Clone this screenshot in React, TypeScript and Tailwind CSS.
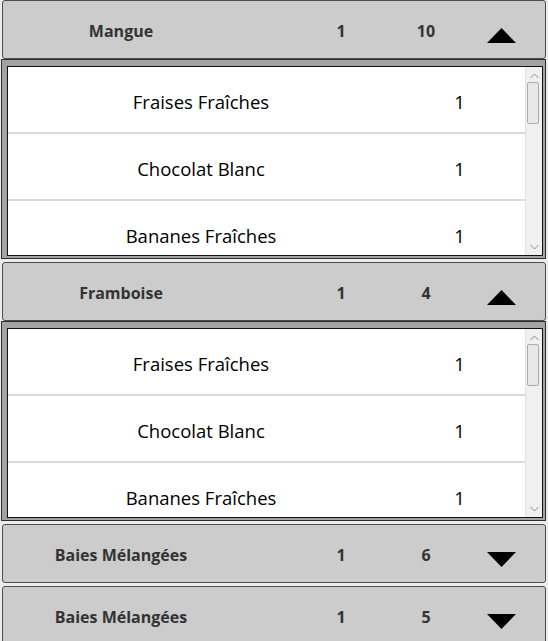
import React from "react";

type Group = { name: string; count: number; total: number; open: boolean };

const groups: Group[] = [
  { name: "Mangue", count: 1, total: 10, open: true },
  { name: "Framboise", count: 1, total: 4, open: true },
  { name: "Baies Mélangées", count: 1, total: 6, open: false },
  { name: "Baies Mélangées", count: 1, total: 5, open: false },
];

const items = [
  { name: "Fraises Fraîches", qty: 1 },
  { name: "Chocolat Blanc", qty: 1 },
  { name: "Bananes Fraîches", qty: 1 },
];

function Triangle({ up }: { up: boolean }) {
  return (
    <svg width="29" height="15" viewBox="0 0 29 15">
      {up ? (
        <polygon points="0,15 14.5,0 29,15" fill="#000" />
      ) : (
        <polygon points="0,0 29,0 14.5,15" fill="#000" />
      )}
    </svg>
  );
}

function Header({ g }: { g: Group }) {
  return (
    <div className="ml-[1px] flex h-[59px] w-[544px] items-center rounded-[3px] border border-[#4d4d4d] bg-[#cccccc] text-[16px] font-bold text-[#333333]">
      <div className="w-[236px] pt-[3px] text-center">{g.name}</div>
      <div className="ml-[82px] w-[40px] pt-[3px] text-center">{g.count}</div>
      <div className="ml-[45px] w-[40px] pt-[3px] text-center">{g.total}</div>
      <div className={`ml-[35px] flex w-[40px] justify-center ${g.open ? "mt-[11px]" : "mt-[12px]"}`}>
        <Triangle up={g.open} />
      </div>
    </div>
  );
}

function Chevron({ up }: { up: boolean }) {
  return (
    <svg width="9" height="6" viewBox="0 0 9 6">
      <polyline
        points={up ? "0.5,5 4.5,1 8.5,5" : "0.5,1 4.5,5 8.5,1"}
        fill="none"
        stroke="#8a8a8a"
        strokeWidth="1"
      />
    </svg>
  );
}

function List() {
  return (
    <div className="h-[200px] w-[545px] border border-[#2e2e2e] bg-[#a3a3a3] pb-[2px] pl-[5px] pr-[2px] pt-[6px]">
      <div className="flex h-full border border-[#111111] bg-white">
        <div className="flex-1 overflow-hidden">
          {items.map((it, i) => (
            <div
              key={i}
              className="grid h-[67px] grid-cols-[386px_1fr] items-center border-b-[2px] border-[#dadada] pt-[4px] text-[18.5px] text-black"
            >
              <div className="text-center">{it.name}</div>
              <div className="text-center">{it.qty}</div>
            </div>
          ))}
        </div>
        <div className="flex w-[17px] flex-col border-l border-[#e2e2e2] bg-[#f0f0f0]">
          <div className="flex h-[15px] items-center justify-center pt-[2px]">
            <Chevron up />
          </div>
          <div className="ml-[1px] mr-[3px] h-[42px] rounded-[2px] border border-[#ababab] bg-[#e8e8e8]" />
          <div className="flex-1" />
          <div className="flex h-[15px] items-center justify-center pb-[2px]">
            <Chevron up={false} />
          </div>
        </div>
      </div>
    </div>
  );
}

export default function App() {
  return (
    <div
      className="h-[641px] w-[548px] overflow-hidden bg-[#ececec] pl-[1px]"
      style={{ fontFamily: '"Open Sans", "Noto Sans", sans-serif' }}
    >
      <div className="flex flex-col gap-[3px]">
        {groups.map((g, i) => (
          <div key={i} className="flex flex-col">
            <Header g={g} />
            {g.open && <List />}
          </div>
        ))}
      </div>
    </div>
  );
}
